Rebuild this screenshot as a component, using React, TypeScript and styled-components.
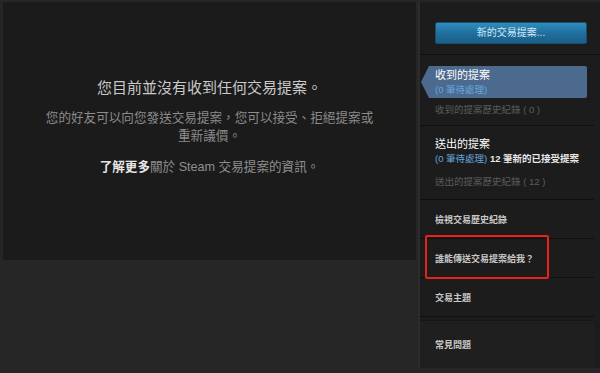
import { createGlobalStyle } from "styled-components";
import styled from "styled-components";

const GlobalStyle = createGlobalStyle`
  html, body {
    margin: 0;
    padding: 0;
    background: #262626;
  }
  body {
    font-family: "Liberation Sans", "Noto Sans CJK TC", sans-serif;
  }
`;

const Page = styled.div`
  display: flex;
  width: 600px;
  height: 373px;
  padding-top: 2px;
  box-sizing: border-box;
  gap: 4px;
  overflow: hidden;
`;

const LeftColumn = styled.div`
  width: 413px;
  margin-left: 3px;
  display: flex;
  flex-direction: column;
`;

const EmptyPanel = styled.div`
  height: 258px;
  background: #1b1b1b;
  display: flex;
  flex-direction: column;
  align-items: center;
  padding-top: 76px;
  box-sizing: border-box;
  text-align: center;
`;

const Title = styled.div`
  font-size: 15px;
  line-height: 20px;
  color: #c9c9c9;
`;

const Subtitle = styled.div`
  margin-top: 11px;
  width: 340px;
  font-size: 12.6px;
  line-height: 18px;
  color: #8c8c8c;
`;

const LearnMore = styled.div`
  margin-top: 13px;
  font-size: 12.6px;
  line-height: 18px;
  color: #8f8f8f;

  strong {
    color: #e6e6e6;
    font-weight: bold;
  }
`;

const Sidebar = styled.div`
  flex: 1;
  height: 366px;
  background: #1c1c1c;
  display: flex;
  flex-direction: column;
  box-shadow: -2px 0 0 #2c2c2c;
`;

const ButtonArea = styled.div`
  padding: 20px 13px 10px 15px;
  border-bottom: 1px solid #0e0e0e;
`;

const NewOfferButton = styled.div`
  height: 20px;
  border: 1px solid #1a4e6e;
  border-radius: 2px;
  background: linear-gradient(to bottom, #2f8dbd 0%, #1f6d9b 55%, #1b5f89 100%);
  color: #d2e8f6;
  font-size: 10px;
  line-height: 20px;
  text-align: center;
`;

const Section = styled.div<{ $top: number; $bottom: number }>`
  padding: ${(p) => p.$top}px 0 ${(p) => p.$bottom}px 0;
  margin-right: 6px;
  border-bottom: 1px solid #0f0f0f;
  display: flex;
  flex-direction: column;
`;

const ActiveTab = styled.div`
  margin: 0 7px 0 1px;
  height: 32px;
  background: #4c6a8e;
  clip-path: polygon(8px 0, 100% 0, 100% 100%, 8px 100%, 0 50%);
  border-radius: 0 2px 2px 0;
  padding: 2px 0 0 14px;
  box-sizing: border-box;
`;

const TabHeading = styled.div`
  font-size: 11px;
  line-height: 15px;
  color: #ffffff;
`;

const SentHeading = styled(TabHeading)`
  padding-left: 15px;
`;

const Pending = styled.div<{ $indent?: boolean }>`
  font-size: 9.5px;
  line-height: 13px;
  color: #66a6de;
  padding-left: ${(p) => (p.$indent ? "15px" : "0")};

  b {
    color: #e8e8e8;
    font-weight: bold;
  }
`;

const HistoryLink = styled.div<{ $gap: number }>`
  padding-left: 15px;
  margin-top: ${(p) => p.$gap}px;
  font-size: 9.5px;
  line-height: 13px;
  color: #5d5d5d;
`;

const NavItem = styled.div`
  position: relative;
  height: 38px;
  margin-right: 6px;
  padding-left: 15px;
  display: flex;
  align-items: center;
  border-bottom: 1px solid #0f0f0f;
  font-size: 9px;
  font-weight: bold;
  color: #c8c8c8;
`;

const FaqBox = styled.div`
  margin-top: 3px;
  height: 47px;
  margin-right: 6px;
  background: #1f1f1f;
  border-top: 1px solid #161616;
  padding-left: 15px;
  display: flex;
  align-items: center;
  font-size: 9px;
  font-weight: bold;
  color: #c8c8c8;
`;

const Highlight = styled.div`
  position: absolute;
  left: 5px;
  top: -4px;
  width: 124px;
  height: 44px;
  box-sizing: border-box;
  border: 2px solid #e3231c;
  border-radius: 2px;
  pointer-events: none;
`;

export default function App() {
  return (
    <>
      <GlobalStyle />
      <Page>
        <LeftColumn>
          <EmptyPanel>
            <Title>您目前並沒有收到任何交易提案。</Title>
            <Subtitle>
              您的好友可以向您發送交易提案，您可以接受、拒絕提案或重新議價。
            </Subtitle>
            <LearnMore>
              <strong>了解更多</strong>關於 Steam 交易提案的資訊。
            </LearnMore>
          </EmptyPanel>
        </LeftColumn>
        <Sidebar>
          <ButtonArea>
            <NewOfferButton>新的交易提案...</NewOfferButton>
          </ButtonArea>
          <Section $top={11} $bottom={9}>
            <ActiveTab>
              <TabHeading>收到的提案</TabHeading>
              <Pending>(0 筆待處理)</Pending>
            </ActiveTab>
            <HistoryLink $gap={5}>收到的提案歷史紀錄 ( 0 )</HistoryLink>
          </Section>
          <Section $top={11} $bottom={11}>
            <SentHeading>送出的提案</SentHeading>
            <Pending $indent>
              (0 筆待處理) <b>12 筆新的已接受提案</b>
            </Pending>
            <HistoryLink $gap={10}>送出的提案歷史紀錄 ( 12 )</HistoryLink>
          </Section>
          <NavItem>檢視交易歷史紀錄</NavItem>
          <NavItem>
            誰能傳送交易提案給我？
            <Highlight />
          </NavItem>
          <NavItem>交易主題</NavItem>
          <FaqBox>常見問題</FaqBox>
        </Sidebar>
      </Page>
    </>
  );
}
